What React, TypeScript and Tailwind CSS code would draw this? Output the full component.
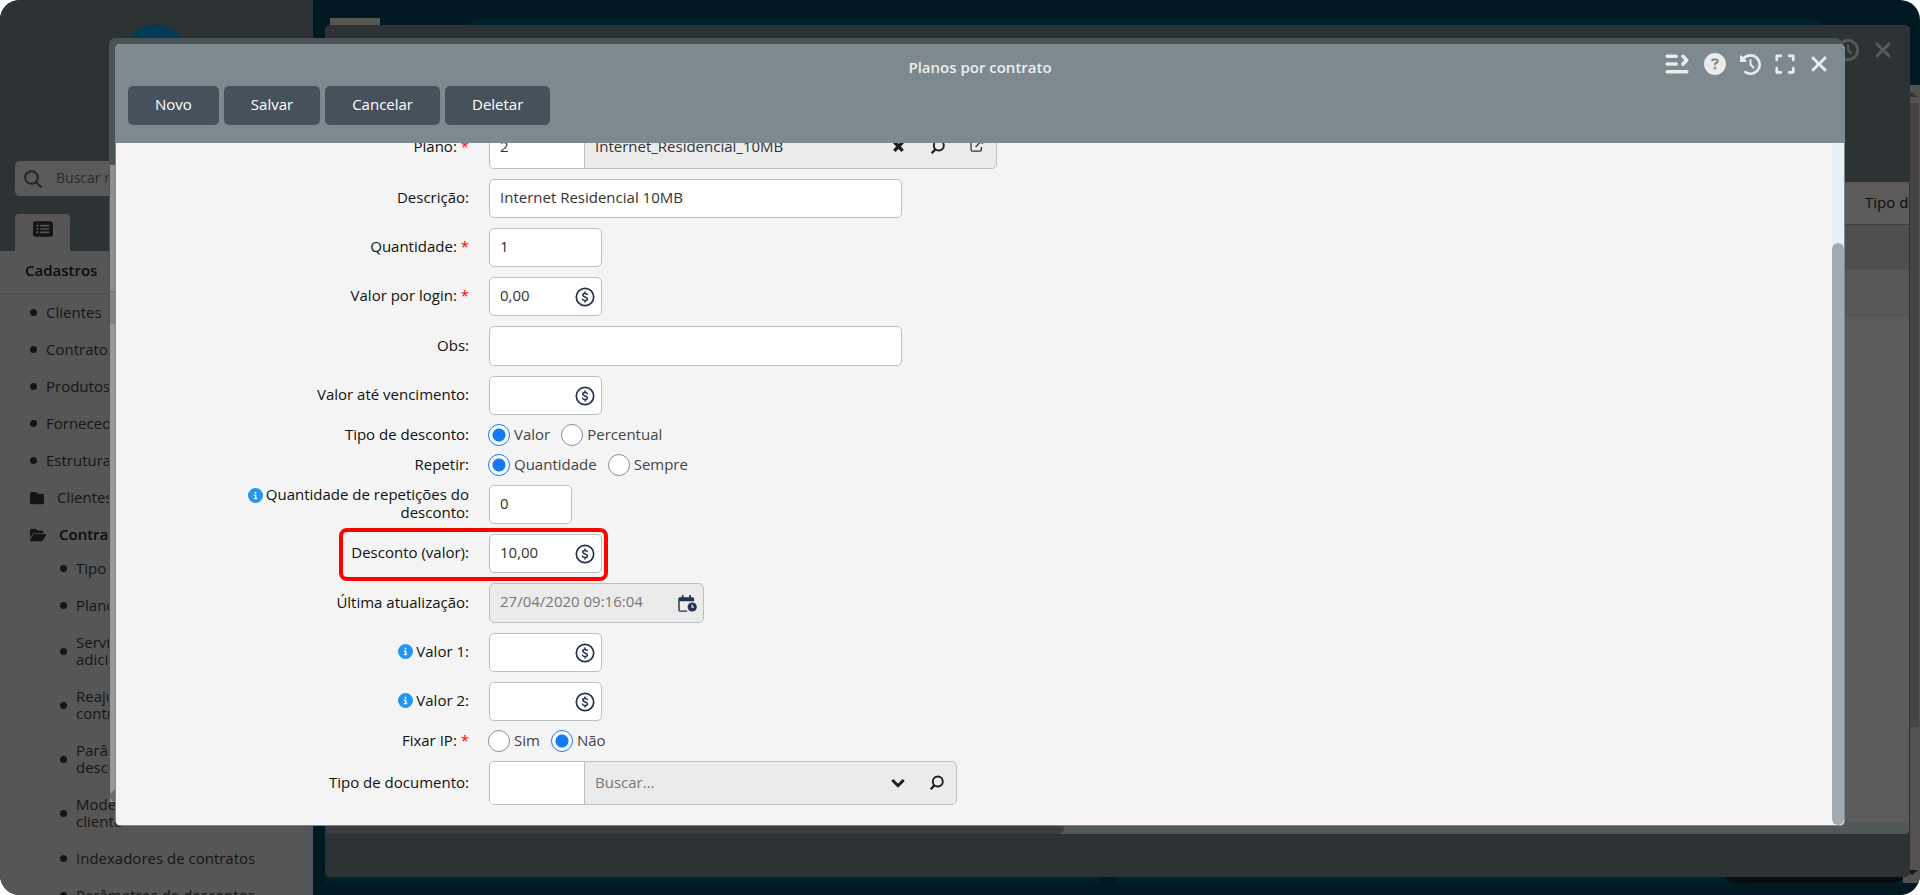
import React, { useState } from "react";
import type { ReactNode } from "react";
import {
  FaCircleInfo,
  FaCircleQuestion,
  FaClockRotateLeft,
  FaExpand,
  FaFolder,
  FaFolderOpen,
  FaRectangleList,
  FaXmark,
} from "react-icons/fa6";

const FIELD =
  "rounded-[5px] border border-[#babfc4] bg-white px-[10px] pb-[3px] text-[15px] text-[#333] outline-none";

function CoinIcon() {
  return (
    <svg viewBox="0 0 20 20" className="h-5 w-5" fill="none" stroke="#22324f" strokeLinecap="round" aria-hidden="true">
      <circle cx="10" cy="10" r="8.7" strokeWidth="1.7" />
      <path d="M12.3 7.6C12 6.7 11.1 6.4 10 6.4c-1.300 0-2.300.6-2.300 1.700 0 2.500 4.700 1.200 4.700 3.800 0 1.100-1 1.700-2.400 1.700-1.300 0-2.200-.5-2.500-1.500M10 5v1.400M10 13.600V15" strokeWidth="1.500" />
    </svg>
  );
}

function CalendarClockIcon() {
  return (
    <svg viewBox="0 0 19 17" className="h-[17px] w-[19px]" aria-hidden="true">
      <path d="M4.700.8v3M12 .8v3" stroke="#22324f" strokeWidth="1.800" strokeLinecap="round" />
      <path d="M.3 6.300V3.900C.3 2.900 1 2.200 2 2.200h12.400c1 0 1.700.7 1.700 1.700v2.400z" fill="#22324f" />
      <path d="M1 6v9c0 .7.400 1.100 1.100 1.100H9" fill="none" stroke="#22324f" strokeWidth="1.400" />
      <circle cx="14.200" cy="12" r="4.600" fill="#22324f" />
      <path d="M14 9.600v2.600h2" fill="none" stroke="#ebebeb" strokeWidth="1.200" />
    </svg>
  );
}

function LensIcon() {
  return (
    <svg viewBox="0 0 16 16" className="h-4 w-4" fill="none" stroke="#1d1d1d" aria-hidden="true">
      <circle cx="8.800" cy="6.500" r="5" strokeWidth="1.900" />
      <path d="M5.200 10.500 1.700 14.200" strokeWidth="2.400" />
    </svg>
  );
}

function CrossIcon() {
  return (
    <svg viewBox="0 0 16 16" className="h-4 w-4" stroke="#1d1d1d" strokeWidth="3.400" aria-hidden="true">
      <path d="M3.300 3l8.400 8.800M11.700 3l-8.400 8.800" />
    </svg>
  );
}

function ChevronIcon() {
  return (
    <svg viewBox="0 0 16 16" className="h-4 w-4" fill="none" stroke="#1d1d1d" strokeWidth="3" aria-hidden="true">
      <path d="M2.300 5 8 10.700 13.700 5" />
    </svg>
  );
}

function OpenIcon() {
  return (
    <svg viewBox="0 0 16 16" className="h-4 w-4" fill="none" stroke="#333" strokeWidth="1.300" aria-hidden="true">
      <path d="M7.500 2H3.700C2.600 2 2 2.600 2 3.700v6.800c0 1.100.6 1.700 1.700 1.700h7c1.100 0 1.700-.6 1.700-1.700V8M6.500 8 13 1.500M9.500 1.200h3.800V5" />
    </svg>
  );
}

function MenuArrowIcon() {
  return (
    <svg viewBox="0 0 24 20" className="h-5 w-6" fill="none" stroke="#ebebeb" strokeWidth="3.600" strokeLinecap="round" strokeLinejoin="round" aria-hidden="true">
      <path d="M2.200 2.200h9M2.200 10h9M2.200 17.700h19.600M18 2.300l3.700 3.900-3.700 3.900" />
    </svg>
  );
}

function Row({
  label,
  id,
  required,
  info,
  highlight,
  children,
}: {
  label: string;
  id?: string;
  required?: boolean;
  info?: boolean;
  highlight?: boolean;
  children: ReactNode;
}) {
  const text = (
    <>
      {info && <FaCircleInfo className="mr-[3px] inline h-[15px] w-[15px] -translate-y-px text-[#2196f3]" />}
      {label}:{required && <span className="text-[#f00]"> *</span>}
    </>
  );
  return (
    <div className="flex items-center">
      <div className="mr-5 w-[353px] shrink-0 pb-[2px] pl-[120px] text-right text-[15px] leading-[17px] text-[#111]">
        {id ? <label htmlFor={id}>{text}</label> : <span>{text}</span>}
      </div>
      <div className="relative">
        {children}
        {highlight && (
          <div className="pointer-events-none absolute -top-1.5 -right-1.5 -bottom-2 w-[269px] rounded-lg border-4 border-[#f00]" />
        )}
      </div>
    </div>
  );
}

function MoneyField({ id, value = "" }: { id: string; value?: string }) {
  return (
    <div className="flex h-[39px] w-[113px] items-center rounded-[5px] border border-[#babfc4] bg-white pr-1.5">
      <input id={id} defaultValue={value} className="min-w-0 flex-1 bg-transparent pb-[2px] pl-[10px] text-[15px] text-[#333] outline-none" />
      <CoinIcon />
    </div>
  );
}

function LookupField({
  id,
  code,
  text,
  placeholder,
  width,
  actions,
}: {
  id: string;
  code?: string;
  text?: string;
  placeholder?: string;
  width: string;
  actions: { label: string; icon: ReactNode }[];
}) {
  return (
    <div className={`flex h-11 overflow-hidden rounded-[5px] border border-[#babfc4] bg-[#ebebeb] text-[15px] text-[#333] ${width}`}>
      <input id={id} defaultValue={code} className="w-[95px] border-r border-[#babfc4] bg-white px-[10px] pb-[2px] outline-none" />
      <input
        aria-label="Buscar"
        defaultValue={text}
        placeholder={placeholder}
        className="min-w-0 flex-1 bg-transparent px-[10px] pb-[2px] outline-none placeholder:text-[#777]"
      />
      {actions.map((a) => (
        <button key={a.label} type="button" aria-label={a.label} className="grid w-[39px] place-items-center">
          {a.icon}
        </button>
      ))}
    </div>
  );
}

function Radios({ name, options, initial }: { name: string; options: string[]; initial: string }) {
  const [value, setValue] = useState(initial);
  return (
    <div className="flex h-5 items-center gap-3 text-[15px] leading-5 text-[#444]">
      {options.map((o) => (
        <label key={o} className="flex items-center gap-1">
          <input
            type="radio"
            name={name}
            checked={value === o}
            onChange={() => setValue(o)}
            className="-ml-px h-[22px] w-[22px] shrink-0 appearance-none rounded-full border border-[#8b8f96] bg-white checked:border-[#147af3] checked:bg-[radial-gradient(circle,#147af3_6px,#fff_7px)]"
          />
          <span className="pb-[3px]">{o}</span>
        </label>
      ))}
    </div>
  );
}

const shortcuts = ["Clientes", "Contratos", "Produtos", "Fornecedores", "Estrutura"];
const contractLinks = [
  ["Tipo de"],
  ["Planos"],
  ["Serviços", "adicionais"],
  ["Reajuste", "contratos"],
  ["Parâmetros", "descontos"],
  ["Modelos", "cliente"],
  ["Indexadores de contratos"],
  ["Parâmetros de descontos"],
];

function Bullet() {
  return <span className="h-[7px] w-[7px] shrink-0 rounded-full bg-[#151515]" />;
}

function Sidebar() {
  return (
    <aside className="flex w-[313px] shrink-0 flex-col overflow-hidden bg-[#565656] text-[15px] leading-[17px] text-[#151515]">
      <div className="flex h-[251px] shrink-0 flex-col bg-[#2d3235]">
        <div className="mt-[25px] ml-[124px] h-16 w-16 rounded-full bg-[#003b57]" />
        <label className="mx-[15px] mt-[72px] flex h-[35px] items-center gap-[14px] rounded-[5px] bg-[#5a5a5a] pl-[9px]">
          <svg viewBox="0 0 18 18" className="h-[18px] w-[18px]" fill="none" stroke="#222" strokeWidth="2" strokeLinecap="round" aria-hidden="true">
            <circle cx="7.500" cy="7.500" r="6.300" />
            <path d="m12.300 12.300 4.500 4.500" />
          </svg>
          <input placeholder="Buscar rotina" className="min-w-0 flex-1 bg-transparent pb-[2px] text-[14px] outline-none placeholder:text-[#2b2b2b]" />
        </label>
        <button type="button" aria-label="Menu" className="mt-auto ml-[15px] flex h-[37px] w-[55px] justify-center rounded-t-[4px] bg-[#565656] pt-[5px]">
          <FaRectangleList className="h-5 w-5 text-[#151515]" />
        </button>
      </div>
      <h2 className="h-[43px] shrink-0 border-b border-[#4b4b4b] pt-[11px] pl-[25px] font-semibold text-[#0c0c0c]">Cadastros</h2>
      <ul className="border-r-[10px] border-[#525657]">
        {shortcuts.map((s) => (
          <li key={s} className="flex h-[37px] items-center gap-[9px] pl-[30px]">
            <Bullet />
            <a href="#">{s}</a>
          </li>
        ))}
        <li className="flex h-[37px] items-center gap-[13px] pl-[30px]">
          <FaFolder className="h-[14px] w-[14px]" />
          <a href="#">Clientes</a>
        </li>
        <li>
          <div className="flex h-[33px] items-center gap-[13px] pt-1 pl-[30px] font-semibold text-[#0c0c0c]">
            <FaFolderOpen className="h-4 w-4 text-[#151515]" />
            <a href="#">Contratos</a>
          </div>
          <ul className="pt-px">
            {contractLinks.map((lines) => (
              <li key={lines.join(" ")} className="flex items-center gap-[9px] py-[10px] pl-[60px]">
                <Bullet />
                <a href="#">
                  {lines.map((l) => (
                    <span key={l} className="block">
                      {l}
                    </span>
                  ))}
                </a>
              </li>
            ))}
          </ul>
        </li>
      </ul>
    </aside>
  );
}

function ContractsWindow() {
  return (
    <section className="absolute top-[25px] right-[10px] bottom-[18px] left-[325px] flex flex-col overflow-hidden rounded-[5px] bg-[#2d3235]">
      <header className="flex h-[157px] shrink-0 items-start justify-end gap-3 pt-[13px] pr-[15px] text-[#5a5a5a]">
        <FaClockRotateLeft className="mt-px h-[22px] w-[22px]" />
        <FaXmark className="h-6 w-6" />
      </header>
      <div className="mx-px flex flex-1 flex-col bg-[#5b5b5b] text-[15px] text-[#0c0c0c]">
        <div className="flex h-[43px] items-center justify-end border-b border-[#3a3f41] pb-[2px]">
          <span className="w-[44px] overflow-hidden whitespace-nowrap">Tipo de cobrança</span>
        </div>
        <div className="h-[45px] bg-[#4f4f4f]" />
        <div className="h-[46px] border-b border-[#505050] bg-[#575757]" />
      </div>
      <div className="mx-px h-3 shrink-0 rounded-b bg-[#525757]">
        <div className="h-3 w-[738px] rounded-r-md bg-[#3a3d3e]" />
      </div>
      <div className="h-[43px] shrink-0" />
    </section>
  );
}

function ContractDialogBehind() {
  return (
    <section className="absolute top-[38px] right-[78px] bottom-[93px] left-[109px] flex flex-col rounded-[6px] bg-[#4a5254]">
      <div className="h-[127px] shrink-0" />
      <div className="ml-px flex flex-1 flex-col bg-[#989898]">
        <div className="h-[127px] border-b border-[#6a6a6a] bg-[#8f8f8f]" />
        <div className="h-8 bg-[#828282]" />
        <div className="mt-auto h-3 rounded-md bg-[#666e70]" />
      </div>
    </section>
  );
}

function PlanDialog() {
  return (
    <section
      role="dialog"
      aria-label="Planos por contrato"
      className="absolute top-[44px] right-[75px] bottom-[69px] left-[115px] flex flex-col overflow-hidden rounded-[5px] border border-t-0 border-[#7d898e] bg-[#f4f4f4]"
    >
      <header className="relative h-[99px] shrink-0 bg-[#7d898e]">
        <h1 className="pt-[13px] text-center text-[15px] leading-5 font-semibold text-[#eee]">Planos por contrato</h1>
        <div className="absolute top-2 right-[15px] flex items-center gap-[14px] text-[#ebebeb]">
          <button type="button" aria-label="Opções" className="pr-px"><MenuArrowIcon /></button>
          <button type="button" aria-label="Ajuda"><FaCircleQuestion className="h-[22px] w-[22px]" /></button>
          <button type="button" aria-label="Histórico"><FaClockRotateLeft className="h-[21px] w-[21px]" /></button>
          <button type="button" aria-label="Expandir"><FaExpand className="h-[22px] w-[20px]" /></button>
          <button type="button" aria-label="Fechar"><FaXmark className="h-6 w-5" /></button>
        </div>
        <div className="mt-[9px] ml-3 flex gap-[5px]">
          {["Novo", "Salvar", "Cancelar", "Deletar"].map((b) => (
            <button key={b} type="button" className="h-[39px] rounded-[5px] bg-[#47515c] px-[27px] pb-[2px] text-[15px] font-medium text-white">
              {b}
            </button>
          ))}
        </div>
      </header>
      <div className="flex min-h-0 flex-1">
        <form className="flex flex-1 flex-col justify-end gap-[10px] overflow-hidden pb-5">
          <Row label="Plano" id="plano" required>
            <LookupField
              id="plano"
              code="2"
              text="Internet_Residencial_10MB"
              width="w-[508px]"
              actions={[
                { label: "Limpar", icon: <CrossIcon /> },
                { label: "Pesquisar plano", icon: <LensIcon /> },
                { label: "Abrir plano", icon: <OpenIcon /> },
              ]}
            />
          </Row>
          <Row label="Descrição" id="descricao">
            <input id="descricao" defaultValue="Internet Residencial 10MB" className={`block h-[39px] w-[413px] ${FIELD}`} />
          </Row>
          <Row label="Quantidade" id="quantidade" required>
            <input id="quantidade" defaultValue="1" className={`block h-[39px] w-[113px] ${FIELD}`} />
          </Row>
          <Row label="Valor por login" id="login" required>
            <MoneyField id="login" value="0,00" />
          </Row>
          <Row label="Obs" id="obs">
            <input id="obs" className={`block h-10 w-[413px] ${FIELD}`} />
          </Row>
          <Row label="Valor até vencimento" id="vencimento">
            <MoneyField id="vencimento" />
          </Row>
          <Row label="Tipo de desconto">
            <Radios name="tipo" options={["Valor", "Percentual"]} initial="Valor" />
          </Row>
          <Row label="Repetir">
            <Radios name="repetir" options={["Quantidade", "Sempre"]} initial="Quantidade" />
          </Row>
          <Row label="Quantidade de repetições do desconto" id="repeticoes" info>
            <input id="repeticoes" defaultValue="0" className={`block h-[39px] w-[83px] ${FIELD}`} />
          </Row>
          <Row label="Desconto (valor)" id="desconto" highlight>
            <MoneyField id="desconto" value="10,00" />
          </Row>
          <Row label="Última atualização" id="atualizacao">
            <div className="flex h-10 w-[215px] items-center rounded-[5px] border border-[#babfc4] bg-[#ebebeb] pr-1.5">
              <input id="atualizacao" readOnly defaultValue="27/04/2020 09:16:04" className="min-w-0 flex-1 bg-transparent pb-[3px] pl-[10px] text-[15px] text-[#777] outline-none" />
              <CalendarClockIcon />
            </div>
          </Row>
          <Row label="Valor 1" id="valor1" info>
            <MoneyField id="valor1" />
          </Row>
          <Row label="Valor 2" id="valor2" info>
            <MoneyField id="valor2" />
          </Row>
          <Row label="Fixar IP" required>
            <Radios name="ip" options={["Sim", "Não"]} initial="Não" />
          </Row>
          <Row label="Tipo de documento" id="documento">
            <LookupField
              id="documento"
              placeholder="Buscar..."
              width="w-[468px]"
              actions={[
                { label: "Mostrar opções", icon: <ChevronIcon /> },
                { label: "Pesquisar documento", icon: <LensIcon /> },
              ]}
            />
          </Row>
        </form>
        <div className="flex w-3 flex-col rounded-full bg-[#e7f1f5] pt-[100px]">
          <div className="flex-1 rounded-full bg-[#a2aab0]" />
        </div>
      </div>
    </section>
  );
}

export default function App() {
  return (
    <div className="h-screen bg-white font-['Open_Sans','Noto_Sans',sans-serif]">
      <main className="relative flex h-full overflow-hidden rounded-[20px] bg-[#001923]">
        <Sidebar />
        <div className="flex min-w-0 flex-1 flex-col justify-between">
          <div className="mt-[18px] flex justify-between">
            <div className="ml-[17px] h-8 w-[50px] bg-[#565752]" />
            <div className="mr-[95px] ml-[85px] h-8 flex-1 rounded-full bg-[#00202c]" />
          </div>
          <div className="mb-3 flex h-8 items-stretch pl-3">
            <div className="flex-1 bg-[#00202c]" />
            <div className="ml-4 flex w-[788px] justify-end bg-[#00202c]">
              <div className="w-[180px] rounded-[10px] bg-[#070d10]" />
            </div>
            <div className="w-4" />
          </div>
        </div>
        <div className="absolute top-[85px] right-0 bottom-3 flex w-[17px] flex-col items-center justify-between bg-[#525252]">
          <div className="flex h-[18px] items-center">
            <div className="border-x-[6px] border-b-[5px] border-x-transparent border-b-[#333]" />
          </div>
          <div className="mb-auto h-[624px] w-[15px] bg-[#444]" />
          <div className="flex h-[22px] items-center">
            <div className="border-x-[6px] border-t-[5px] border-x-transparent border-t-[#151515]" />
          </div>
        </div>
        <ContractsWindow />
        <ContractDialogBehind />
        <PlanDialog />
      </main>
    </div>
  );
}
